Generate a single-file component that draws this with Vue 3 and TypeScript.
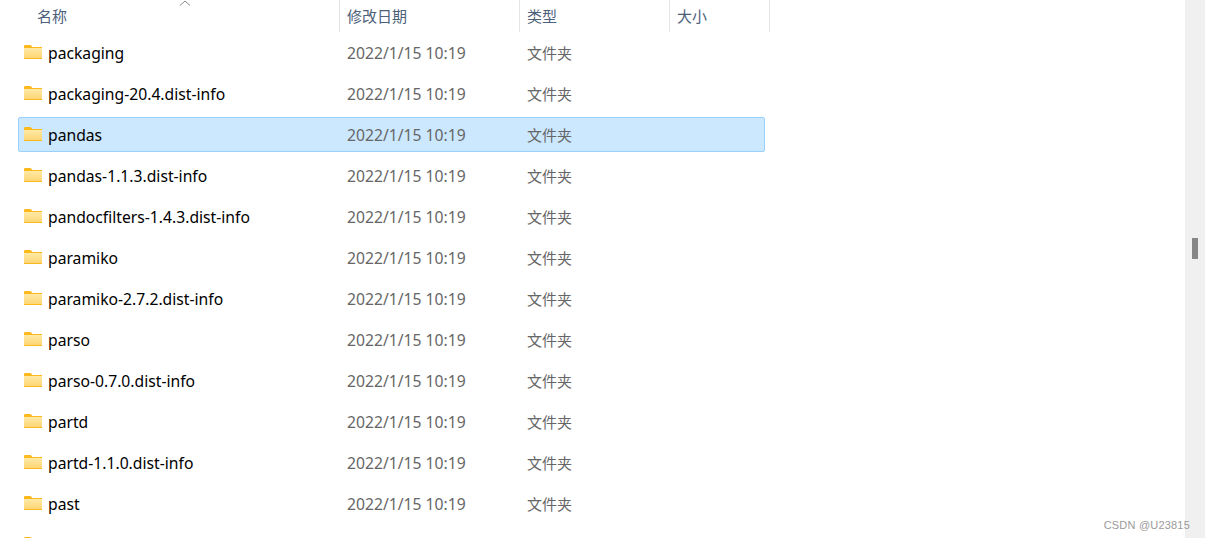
<script setup lang="ts">
const names: string[] = [
  'packaging',
  'packaging-20.4.dist-info',
  'pandas',
  'pandas-1.1.3.dist-info',
  'pandocfilters-1.4.3.dist-info',
  'paramiko',
  'paramiko-2.7.2.dist-info',
  'parso',
  'parso-0.7.0.dist-info',
  'partd',
  'partd-1.1.0.dist-info',
  'past',
  '',
]
</script>

<template>
  <div class="page">
    <div class="explorer">
      <div class="header">
        <div class="hcell name">
          名称
          <svg class="sort" width="12" height="6" viewBox="0 0 12 6"><path d="M1 5.5 L6 1 L11 5.5" fill="none" stroke="#8a8a8a" stroke-width="1" /></svg>
        </div>
        <div class="hcell date">修改日期</div>
        <div class="hcell type">类型</div>
        <div class="hcell size">大小</div>
      </div>
      <div class="rows">
        <div v-for="n in names" :key="n" class="row" :class="{ selected: n === 'pandas' }">
          <div class="cell-name">
            <svg class="folder" width="18" height="14" viewBox="0 0 18 14">
              <defs>
                <linearGradient id="fg" x1="0" y1="0" x2="0" y2="1">
                  <stop offset="0" stop-color="#ffe9a6" />
                  <stop offset="1" stop-color="#fdd675" />
                </linearGradient>
              </defs>
              <path d="M0 1 Q0 0 1 0 H6.5 L8.5 2 H18 V13.5 Q18 14 17.5 14 H0.5 Q0 14 0 13.5 Z" fill="#fcb91e" />
              <rect x="0" y="3" width="18" height="10" fill="url(#fg)" />
            </svg>
            <span class="fname">{{ n }}</span>
          </div>
          <template v-if="n">
            <div class="cell date">2022/1/15 10:19</div>
            <div class="cell type">文件夹</div>
          </template>
        </div>
      </div>
    </div>
    <aside class="scrollbar">
      <div class="thumb"></div>
    </aside>
    <div class="watermark">CSDN @U23815</div>
  </div>
</template>

<style>
html, body { margin: 0; background: #fff; overflow: hidden; }
</style>

<style scoped>
.page {
  position: relative;
  display: flex;
  width: 1205px;
  height: 538px;
  overflow: hidden;
  background: #fff;
  font-family: "Noto Sans", "Noto Sans CJK SC", sans-serif;
}
.explorer { flex: 1; min-width: 0; }
.header {
  display: flex;
  height: 32px;
  font-size: 15px;
  color: #4c607a;
}
.hcell {
  position: relative;
  box-sizing: border-box;
  padding: 3px 0 0 7px;
  line-height: 26px;
  border-right: 1px solid #e5e5e5;
}
.hcell.name { width: 340px; padding-left: 37px; }
.hcell.date { width: 180px; }
.hcell.type { width: 150px; }
.hcell.size { width: 100px; }
.sort { position: absolute; left: 179px; top: 0; }
.rows { padding-left: 18px; width: 747px; }
.row {
  display: flex;
  align-items: center;
  box-sizing: border-box;
  height: 35px;
  margin: 3px 0 6px;
  border: 1px solid transparent;
  border-radius: 2px;
  font-size: 15.7px;
}
.row.selected {
  background: #cce8ff;
  border-color: #99d1ff;
}
.cell-name {
  display: flex;
  align-items: center;
  flex: none;
  width: 323px;
  padding-left: 5px;
  gap: 6px;
}
.folder { flex: none; margin-top: -2px; }
.fname { color: #000; white-space: nowrap; }
.cell { white-space: nowrap; color: #666; }
.cell.date { width: 180px; flex: none; }
.cell.type { font-size: 15px; }
.scrollbar {
  position: relative;
  flex: none;
  width: 20px;
  background: #f0f0f0;
}
.thumb {
  position: absolute;
  left: 7px;
  top: 238px;
  width: 6px;
  height: 21px;
  background: #868686;
}
.watermark {
  position: absolute;
  right: 15px;
  bottom: 7px;
  font-family: "Liberation Sans", sans-serif;
  font-size: 11px;
  letter-spacing: 0.2px;
  color: #9a9a9a;
}
</style>
